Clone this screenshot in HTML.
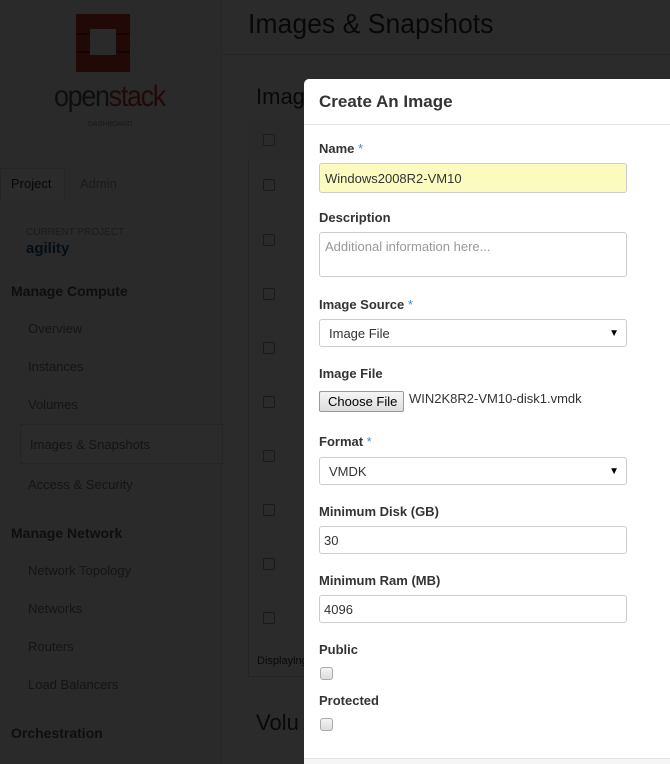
<!DOCTYPE html>
<html style="overflow:hidden;width:670px;height:764px"><head><meta charset="utf-8"><style>
*{box-sizing:border-box;margin:0;padding:0}
body{width:670px;height:764px;overflow:hidden;position:relative;font-family:"Liberation Sans",Arial,sans-serif;background:#fff}
.a{position:absolute}
.sb{left:0;top:0;width:222px;height:764px;background:#f9f9f9;border-right:1px solid #e6e6e6}
.nav{left:28px;font-size:13px;color:#777}
.h{left:11px;font-size:14px;font-weight:bold;color:#555}
.cb{width:12px;height:12px;border:1px solid #999;border-radius:2px;background:#fff}
.ov{left:0;top:0;width:670px;height:764px;background:rgba(0,0,0,.83)}
.m{left:304px;top:79px;width:366px;height:685px;background:#fff;border-radius:5px 0 0 0;overflow:hidden}
.lb{left:15px;font-size:13px;font-weight:bold;color:#333}
.lb i{font-style:normal;color:#428bca;font-weight:normal}
.in{left:15px;width:308px;height:30px;border:1px solid #ccc;border-radius:3px;font-size:13px;color:#333;padding:7px 9px}
.arr{position:absolute;right:7px;top:8px;font-size:10px;color:#000}
.ck{left:16px;width:13px;height:13px;border:1px solid #aaa;border-radius:3px;background:linear-gradient(#f4f4f4,#ddd)}
</style></head><body>
<div class="a sb"></div>
<svg class="a" style="left:70px;top:12px" width="66" height="66" viewBox="0 0 66 66"><rect x="6" y="2" width="54" height="58" fill="#c03a2b"/><rect x="20" y="17" width="26" height="26" fill="#f5f5f5"/><path d="M6 22h14M46 22h14M6 40h14M46 40h14" stroke="#8a1f17" stroke-width="2"/></svg>
<div class="a" style="left:54px;top:80px;font-size:30px;letter-spacing:-1.5px;transform:scaleX(.9);transform-origin:left;color:#555">open<span style="color:#c03a2b">stack</span></div>
<div class="a" style="left:88px;top:121px;font-size:7px;color:#888">DASHBOARD</div>
<div class="a" style="left:0;top:168px;width:65px;height:33px;background:#fff;border:1px solid #ddd;border-bottom:none"></div>
<div class="a" style="left:11px;top:176px;font-size:13px;color:#333">Project</div>
<div class="a" style="left:80px;top:176px;font-size:13px;color:#999">Admin</div>
<div class="a" style="left:26px;top:227px;font-size:10px;color:#999">CURRENT PROJECT</div>
<div class="a" style="left:26px;top:240px;font-size:15px;font-weight:bold;color:#1e4f7a">agility</div>
<div class="a h" style="top:283px">Manage Compute</div>
<div class="a nav" style="top:321px">Overview</div>
<div class="a nav" style="top:359px">Instances</div>
<div class="a nav" style="top:397px">Volumes</div>
<div class="a" style="left:20px;top:424px;width:203px;height:40px;background:#fff;border:1px solid #ddd"></div>
<div class="a nav" style="left:30px;top:437px">Images &amp; Snapshots</div>
<div class="a nav" style="top:477px">Access &amp; Security</div>
<div class="a h" style="top:525px">Manage Network</div>
<div class="a nav" style="top:563px">Network Topology</div>
<div class="a nav" style="top:601px">Networks</div>
<div class="a nav" style="top:639px">Routers</div>
<div class="a nav" style="top:677px">Load Balancers</div>
<div class="a h" style="top:725px">Orchestration</div>
<div class="a" style="left:222px;top:54px;width:448px;height:1px;background:#ddd"></div>
<div class="a" style="left:248px;top:8px;font-size:28px;color:#333;transform:scaleX(.95);transform-origin:left">Images &amp; Snapshots</div>
<div class="a" style="left:256px;top:84px;font-size:22px;color:#333">Imag</div>
<div class="a" style="left:248px;top:122px;width:60px;height:555px;border:1px solid #ddd;background:#fff"></div>
<div class="a" style="left:248px;top:122px;width:60px;height:36px;background:#f5f5f5"></div>
<div class="a" style="left:263px;top:134px" ><div class="cb"></div></div>
<div class="a" style="left:263px;top:179px"><div class="cb"></div></div>
<div class="a" style="left:263px;top:234px"><div class="cb"></div></div>
<div class="a" style="left:263px;top:288px"><div class="cb"></div></div>
<div class="a" style="left:263px;top:342px"><div class="cb"></div></div>
<div class="a" style="left:263px;top:396px"><div class="cb"></div></div>
<div class="a" style="left:263px;top:450px"><div class="cb"></div></div>
<div class="a" style="left:263px;top:504px"><div class="cb"></div></div>
<div class="a" style="left:263px;top:558px"><div class="cb"></div></div>
<div class="a" style="left:263px;top:612px"><div class="cb"></div></div>
<div class="a" style="left:257px;top:655px;font-size:11px;color:#333">Displaying</div>
<div class="a" style="left:256px;top:710px;font-size:22px;color:#333">Volu</div>
<div class="a ov"></div>
<div class="a m">
<div class="a" style="left:15px;top:13px;font-size:17px;font-weight:bold;color:#333">Create An Image</div>
<div class="a" style="left:0;top:45px;width:380px;height:1px;background:#e5e5e5"></div>
<div class="a lb" style="top:62px">Name <i>*</i></div>
<div class="a in" style="top:84px;background:#fbfbc0;padding:7px 5px">Windows2008R2-VM10</div>
<div class="a lb" style="top:131px">Description</div>
<div class="a in" style="top:153px;height:45px;color:#999;padding:6px 5px">Additional information here...</div>
<div class="a lb" style="top:218px">Image Source <i>*</i></div>
<div class="a in" style="top:240px;height:28px;padding:6px 9px">Image File<span class="arr">▼</span></div>
<div class="a lb" style="top:287px">Image File</div>
<div class="a" style="left:15px;top:312px;width:85px;height:21px;border:1px solid #999;border-radius:2px;background:linear-gradient(#f5f5f5,#ddd);font-size:13px;color:#000;padding:2px 0 0 8px">Choose File</div>
<div class="a" style="left:105px;top:312px;font-size:13px;color:#333">WIN2K8R2-VM10-disk1.vmdk</div>
<div class="a lb" style="top:355px">Format <i>*</i></div>
<div class="a in" style="top:378px;height:28px;padding:6px 9px">VMDK<span class="arr">▼</span></div>
<div class="a lb" style="top:425px">Minimum Disk (GB)</div>
<div class="a in" style="top:447px;height:28px;padding:6px 4px">30</div>
<div class="a lb" style="top:494px">Minimum Ram (MB)</div>
<div class="a in" style="top:516px;height:28px;padding:6px 4px">4096</div>
<div class="a lb" style="top:563px">Public</div>
<div class="a ck" style="top:588px"></div>
<div class="a lb" style="top:614px">Protected</div>
<div class="a ck" style="top:639px"></div>
<div class="a" style="left:0;top:679px;width:380px;height:30px;border-top:1px solid #e5e5e5;background:#f5f5f5"></div>
</div>
</body></html>
